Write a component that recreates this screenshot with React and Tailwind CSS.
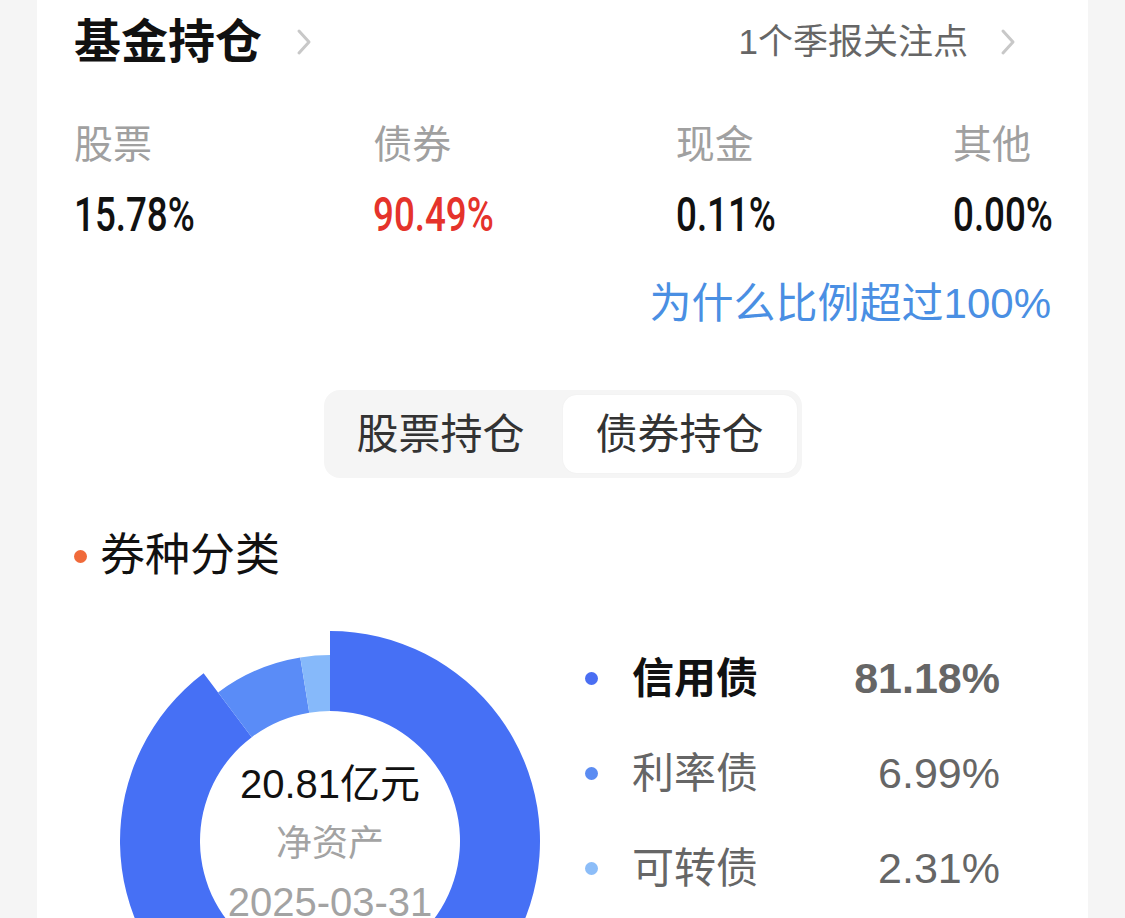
import React from "react";

const cjk = { fontFamily: '"Liberation Sans", "Noto Sans CJK SC", sans-serif' };

// widths are the condensed value widths, so justify-between spaces columns like the app
const stats = [
  { label: "股票", value: "15.78%", color: "text-[#111111]", w: "w-[118px]" },
  { label: "债券", value: "90.49%", color: "text-[#e5332b]", w: "w-[121px]" },
  { label: "现金", value: "0.11%", color: "text-[#111111]", w: "w-[96px]" },
  { label: "其他", value: "0.00%", color: "text-[#111111]", w: "w-[98px]" },
];

const bonds = [
  { name: "信用债", value: 81.18, color: "#4670f5", dot: "bg-[#4a6ef2]", active: true },
  { name: "利率债", value: 6.99, color: "#5a8cf7", dot: "bg-[#5b8cf2]" },
  { name: "可转债", value: 2.31, color: "#86b9fa", dot: "bg-[#8cbdf8]" },
];

const Chevron = ({ className }) => (
  <svg viewBox="0 0 16 28" className={className} fill="none">
    <polyline points="3,3 13,14 3,25" stroke="#c8c8c8" strokeWidth="3" strokeLinecap="round" strokeLinejoin="round" />
  </svg>
);

const pt = (cx, cy, r, deg) => {
  const a = ((deg - 90) * Math.PI) / 180;
  return [cx + r * Math.cos(a), cy + r * Math.sin(a)];
};

const arc = (cx, cy, ro, ri, s, e) => {
  const large = e - s > 180 ? 1 : 0;
  const [x1, y1] = pt(cx, cy, ro, s);
  const [x2, y2] = pt(cx, cy, ro, e);
  const [x3, y3] = pt(cx, cy, ri, e);
  const [x4, y4] = pt(cx, cy, ri, s);
  return `M${x1} ${y1} A${ro} ${ro} 0 ${large} 1 ${x2} ${y2} L${x3} ${y3} A${ri} ${ri} 0 ${large} 0 ${x4} ${y4} Z`;
};

const Donut = () => {
  const total = bonds.reduce((s, b) => s + b.value, 0);
  let start = 0;
  return (
    <div className="relative w-[420px] h-[420px] shrink-0">
      <svg viewBox="0 0 420 420" className="absolute inset-0 w-full h-full">
        {bonds.map((b) => {
          const end = start + (b.value / total) * 360;
          const d = arc(210, 210, b.active ? 210 : 186, 130, start, end);
          start = end;
          return <path key={b.name} d={d} fill={b.color} />;
        })}
      </svg>
      <div className="absolute inset-0 flex flex-col items-center pt-[124px]">
        <p className="text-[40px] leading-[59px] text-[#111111]">20.81亿元</p>
        <p className="text-[36px] leading-[59px] text-[#a3a3a3]">净资产</p>
        <p className="text-[40px] leading-[59px] text-[#a3a3a3]">2025-03-31</p>
      </div>
    </div>
  );
};

const App = () => {
  return (
    <div className="min-h-screen bg-[#f5f5f5] flex justify-center" style={cjk}>
      <div className="w-[1051px] bg-white px-[37px]">
        <div className="h-[84px] flex items-center justify-between mr-[35px]">
          <div className="flex items-center">
            <h1 className="text-[47px] leading-[56px] font-bold text-[#111111]">基金持仓</h1>
            <Chevron className="w-[16px] h-[28px] ml-[34px]" />
          </div>
          <div className="flex items-center">
            <span className="text-[35px] leading-[44px] text-[#666666]">1个季报关注点</span>
            <Chevron className="w-[16px] h-[28px] ml-[32px]" />
          </div>
        </div>

        <div className="flex justify-between mt-[40px]">
          {stats.map((s) => (
            <div key={s.label} className={`flex flex-col ${s.w}`}>
              <span className="text-[39px] leading-[42px] text-[#a0a0a0] whitespace-nowrap">{s.label}</span>
              <span
                className={`mt-[24px] text-[49px] leading-[50px] font-medium whitespace-nowrap ${s.color}`}
                style={{ fontFamily: "Roboto, sans-serif" }}
              >
                <span className="inline-block origin-left scale-x-[0.75]">{s.value}</span>
              </span>
            </div>
          ))}
        </div>

        <div className="flex justify-end mt-[42px]">
          <span className="text-[42px] leading-[44px] text-[#4a8fe3]">为什么比例超过100%</span>
        </div>

        <div className="flex justify-center mt-[64px]">
          <div className="flex p-[5px] rounded-[16px] bg-[#f5f5f5]">
            <button className="w-[234px] h-[78px] pr-[10px] rounded-[14px] text-[42px] text-[#333333]">股票持仓</button>
            <button className="w-[234px] h-[78px] rounded-[14px] bg-white text-[42px] text-[#333333] shadow-[0_0_2px_rgba(0,0,0,0.04)]">
              债券持仓
            </button>
          </div>
        </div>

        <div className="flex items-center mt-[52px]">
          <span className="w-[13px] h-[13px] rounded-full bg-[#f06a3a]" />
          <h2 className="ml-[13px] text-[45px] leading-[52px] text-[#111111]">券种分类</h2>
        </div>

        <div className="flex mt-[49px] ml-[46px]">
          <Donut />
          <div className="ml-[45px] w-[415px] flex flex-col">
            {bonds.map((b) => (
              <div key={b.name} className="h-[95px] flex items-center">
                <span className={`w-[13px] h-[13px] rounded-full ${b.dot}`} />
                <span
                  className={`ml-[34px] text-[42px] ${b.active ? "font-bold text-[#111111]" : "text-[#666666]"}`}
                >
                  {b.name}
                </span>
                <span className={`ml-auto text-[43px] text-[#666666] ${b.active ? "font-bold" : ""}`}>
                  {b.value.toFixed(2)}%
                </span>
              </div>
            ))}
          </div>
        </div>
      </div>
    </div>
  );
};

export default App;
